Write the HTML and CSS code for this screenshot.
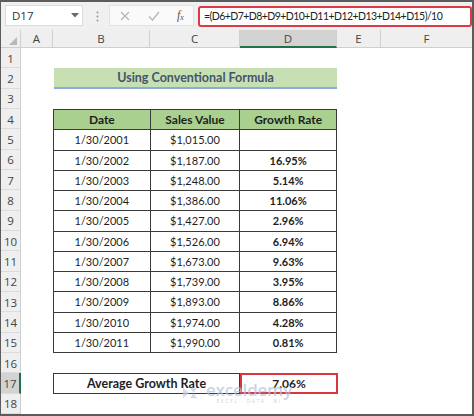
FILE: index.html
```html
<!DOCTYPE html>
<html>
<head>
<meta charset="utf-8">
<link rel="stylesheet" href="styles.css">
</head>
<body>
<div class="window">
  <div class="fbar">
    <div class="namebox">
      <span class="name">D17</span>
      <svg class="caret" width="8" height="5" viewBox="0 0 8 5"><path d="M0 0h8L4 4.5z" fill="#6a6a6a"/></svg>
    </div>
    <svg class="grip" width="3" height="11" viewBox="0 0 3 11"><circle cx="1.5" cy="1.5" r="1" fill="#9a9a9a"/><circle cx="1.5" cy="5.5" r="1" fill="#9a9a9a"/><circle cx="1.5" cy="9.5" r="1" fill="#9a9a9a"/></svg>
    <div class="fnbtns">
      <svg class="btn" width="10" height="10" viewBox="0 0 10 10"><path d="M1 1l8 8M9 1l-8 8" stroke="#b4b4b4" stroke-width="1.2" fill="none"/></svg>
      <svg class="btn" width="12" height="10" viewBox="0 0 12 10"><path d="M1 5.5l3.5 3.5L11 1" stroke="#b4b4b4" stroke-width="1.2" fill="none"/></svg>
      <span class="fx">f<sub>x</sub></span>
    </div>
    <div class="formula">=(D6+D7+D8+D9+D10+D11+D12+D13+D14+D15)/10</div>
  </div>
  <div class="sheet">
    <div class="rowheads">
      <div class="corner"><svg width="8" height="8" viewBox="0 0 8 8"><path d="M8 0v8H0z" fill="#b9b9b9"/></svg></div>
      <div class="rh">1</div>
      <div class="rh">2</div>
      <div class="rh">3</div>
      <div class="rh">4</div>
      <div class="rh">5</div>
      <div class="rh">6</div>
      <div class="rh">7</div>
      <div class="rh">8</div>
      <div class="rh">9</div>
      <div class="rh">10</div>
      <div class="rh">11</div>
      <div class="rh">12</div>
      <div class="rh">13</div>
      <div class="rh">14</div>
      <div class="rh">15</div>
      <div class="rh">16</div>
      <div class="rh sel">17</div>
      <div class="rh">18</div>
    </div>
    <div class="grid">
      <div class="ch">A</div>
      <div class="ch">B</div>
      <div class="ch">C</div>
      <div class="ch sel">D</div>
      <div class="ch">E</div>
      <div class="ch last">F</div>

      <div class="title">Using Conventional Formula</div>

      <div class="tbl">
        <div class="c hd">Date</div><div class="c hd">Sales Value</div><div class="c hd">Growth Rate</div>
        <div class="c">1/30/2001</div><div class="c">$1,015.00</div><div class="c b"></div>
        <div class="c">1/30/2002</div><div class="c">$1,187.00</div><div class="c b">16.95%</div>
        <div class="c">1/30/2003</div><div class="c">$1,248.00</div><div class="c b">5.14%</div>
        <div class="c">1/30/2004</div><div class="c">$1,386.00</div><div class="c b">11.06%</div>
        <div class="c">1/30/2005</div><div class="c">$1,427.00</div><div class="c b">2.96%</div>
        <div class="c">1/30/2006</div><div class="c">$1,526.00</div><div class="c b">6.94%</div>
        <div class="c">1/30/2007</div><div class="c">$1,673.00</div><div class="c b">9.63%</div>
        <div class="c">1/30/2008</div><div class="c">$1,739.00</div><div class="c b">3.95%</div>
        <div class="c">1/30/2009</div><div class="c">$1,893.00</div><div class="c b">8.86%</div>
        <div class="c">1/30/2010</div><div class="c">$1,974.00</div><div class="c b">4.28%</div>
        <div class="c">1/30/2011</div><div class="c">$1,990.00</div><div class="c b">0.81%</div>
      </div>

      <div class="avg-label">Average Growth Rate</div>
      <div class="avg-val">7.06%</div>

      <div class="watermark">
        <svg class="wm-logo" width="18" height="14" viewBox="0 0 20 16"><path d="M2 2l7 6-7 6zM10 2h8l-4 6 4 6h-8l4-6z" fill="#c3d0e3"/></svg>
        <div class="wm-text">
          <span class="wm-name">exceldemy</span>
          <span class="wm-sub">EXCEL · DATA · BI</span>
        </div>
      </div>
    </div>
  </div>
</div>
</body>
</html>
```

FILE: styles.css
```css
* { box-sizing: border-box; }
html, body { margin: 0; padding: 0; background: #ffffff; }
.window {
  width: 474px;
  height: 416px;
  border: 2px solid #5c5c5c;
  border-left-width: 1px;
  background: #ffffff;
  display: flex;
  flex-direction: column;
  overflow: hidden;
  font-family: "Open Sans", "Liberation Sans", sans-serif;
}
.fbar {
  height: 28px;
  background: #f0f0f0;
  display: flex;
  align-items: flex-start;
  padding-top: 3px;
  padding-left: 4px;
  flex: none;
}
.namebox {
  width: 78px;
  height: 21px;
  background: #ffffff;
  border: 1px solid #dcdcdc;
  display: flex;
  align-items: center;
  justify-content: space-between;
  padding: 0 3px 0 6px;
}
.name { font-size: 11.5px; color: #333; }
.grip { margin: 6px 10px 0 13px; }
.fnbtns {
  width: 85px;
  height: 21px;
  background: #fafafa;
  border: 1px solid #e2e2e2;
  display: flex;
  align-items: center;
  padding-left: 10px;
}
.fnbtns .btn:nth-child(2) { margin-left: 18px; }
.fx {
  margin-left: 17px;
  font-family: "Liberation Serif", serif;
  font-style: italic;
  font-size: 12px;
  color: #555;
}
.fx sub { font-size: 8px; vertical-align: -1px; }
.formula {
  margin-left: 4px;
  width: 274px;
  height: 21px;
  margin-top: 1px;
  background: #ffffff;
  border: 2px solid #dc3a44;
  border-radius: 3px;
  font-family: "Lato", "Open Sans", sans-serif;
  font-size: 10.5px;
  letter-spacing: -0.55px;
  color: #222;
  padding-left: 4px;
  line-height: 17px;
  white-space: nowrap;
  overflow: hidden;
}
.sheet { display: flex; flex: 1; }
.rowheads {
  width: 20px;
  background: #efefef;
  display: grid;
  grid-template-rows: 18px repeat(18, 1fr);
  border-right: 1px solid #cfcfcf;
}
.corner {
  display: flex;
  align-items: flex-end;
  justify-content: flex-end;
  padding: 0 3px 2px 0;
  border-bottom: 1px solid #cfcfcf;
}
.rh {
  font-size: 11.5px;
  color: #444;
  display: flex;
  align-items: center;
  justify-content: center;
  border-bottom: 1px solid #dcdcdc;
  padding-top: 1px;
}
.rh.sel { background: #d3d3d3; border-right: 2px solid #217346; margin-right: -1px; }
.grid {
  position: relative;
  flex: 1;
  display: grid;
  grid-template-columns: 32px 97px 90px 97px 44px 1fr;
  grid-template-rows: 18px repeat(18, 1fr);
}
.ch {
  grid-row: 1;
  background: #efefef;
  border-right: 1px solid #cfcfcf;
  border-bottom: 1px solid #cfcfcf;
  font-size: 11.5px;
  color: #444;
  display: flex;
  align-items: center;
  justify-content: center;
}
.ch.sel { background: #d3d3d3; border-bottom: 2px solid #217346; }
.ch.last { border-right: none; }
.title {
  grid-column: 2 / 5;
  grid-row: 3;
  background: #c6e0b4;
  border-bottom: 2px solid #8ea9db;
  color: #44546a;
  font-family: "Lato", "Open Sans", sans-serif;
  font-weight: bold;
  font-size: 12.5px;
  display: flex;
  align-items: center;
  justify-content: center;
  margin-left: 1px;
  padding-top: 1px;
}
.tbl {
  grid-column: 2 / 5;
  grid-row: 5 / 17;
  display: grid;
  grid-template-columns: 97fr 90fr 97fr;
  grid-template-rows: repeat(12, 1fr);
  border-top: 1px solid #3a3a3a;
  border-left: 1px solid #3a3a3a;
}
.c {
  border-right: 1px solid #3a3a3a;
  border-bottom: 1px solid #3a3a3a;
  display: flex;
  align-items: center;
  justify-content: center;
  font-family: "Lato", "Open Sans", sans-serif;
  font-size: 11px;
  color: #1e1e1e;
}
.c.hd { background: #a9d08e; font-weight: bold; font-size: 12px; }
.c.b { font-weight: bold; }
.avg-label {
  grid-column: 2 / 4;
  grid-row: 18;
  border: 1px solid #3a3a3a;
  display: flex;
  align-items: center;
  justify-content: center;
  font-family: "Lato", "Open Sans", sans-serif;
  font-weight: bold;
  font-size: 12.5px;
  color: #1e1e1e;
}
.avg-val {
  grid-column: 4 / 5;
  grid-row: 18;
  border: 2px solid #d9363e;
  display: flex;
  align-items: center;
  justify-content: center;
  font-family: "Lato", "Open Sans", sans-serif;
  font-weight: bold;
  font-size: 12px;
  color: #1e1e1e;
  margin-right: -1px;
}
.watermark {
  position: absolute;
  left: 160px;
  top: 351px;
  display: flex;
  align-items: center;
  gap: 7px;
  opacity: 0.7;
  pointer-events: none;
}
.wm-text { display: flex; flex-direction: column; align-items: center; line-height: 1; }
.wm-name {
  font-family: "Open Sans", sans-serif;
  font-size: 17px;
  font-weight: 600;
  color: #b4c4dc;
  letter-spacing: -0.2px;
}
.wm-sub {
  font-family: "Open Sans", sans-serif;
  font-size: 5px;
  color: #b4c4dc;
  letter-spacing: 1.5px;
  margin-top: 1px;
}
```
